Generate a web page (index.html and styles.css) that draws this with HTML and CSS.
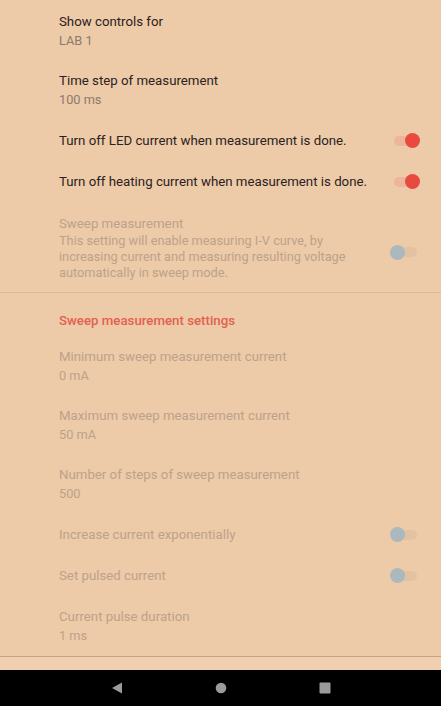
FILE: index.html
```html
<!DOCTYPE html>
<html>
<head>
<meta charset="utf-8">
<link rel="stylesheet" href="styles.css">
</head>
<body>
<div class="screen">
  <div class="list">
    <div class="pref">
      <div class="text">
        <div class="title">Show controls for</div>
        <div class="summary">LAB 1</div>
      </div>
    </div>
    <div class="pref">
      <div class="text">
        <div class="title">Time step of measurement</div>
        <div class="summary">100 ms</div>
      </div>
    </div>
    <div class="pref single">
      <div class="text">
        <div class="title">Turn off LED current when measurement is done.</div>
      </div>
      <div class="switch on"><span class="track"></span><span class="knob"></span></div>
    </div>
    <div class="pref single">
      <div class="text">
        <div class="title">Turn off heating current when measurement is done.</div>
      </div>
      <div class="switch on"><span class="track"></span><span class="knob"></span></div>
    </div>
    <div class="pref sweep disabled">
      <div class="text">
        <div class="title">Sweep measurement</div>
        <div class="desc">This setting will enable measuring I-V curve, by increasing current and measuring resulting voltage automatically in sweep mode.</div>
      </div>
      <div class="switch off"><span class="track"></span><span class="knob"></span></div>
    </div>
    <div class="divider"></div>
    <div class="category">Sweep measurement settings</div>
    <div class="pref disabled">
      <div class="text">
        <div class="title">Minimum sweep measurement current</div>
        <div class="summary">0 mA</div>
      </div>
    </div>
    <div class="pref disabled">
      <div class="text">
        <div class="title">Maximum sweep measurement current</div>
        <div class="summary">50 mA</div>
      </div>
    </div>
    <div class="pref disabled">
      <div class="text">
        <div class="title">Number of steps of sweep measurement</div>
        <div class="summary">500</div>
      </div>
    </div>
    <div class="pref single disabled">
      <div class="text">
        <div class="title">Increase current exponentially</div>
      </div>
      <div class="switch off"><span class="track"></span><span class="knob"></span></div>
    </div>
    <div class="pref single disabled">
      <div class="text">
        <div class="title">Set pulsed current</div>
      </div>
      <div class="switch off"><span class="track"></span><span class="knob"></span></div>
    </div>
    <div class="pref disabled last">
      <div class="text">
        <div class="title">Current pulse duration</div>
        <div class="summary">1 ms</div>
      </div>
    </div>
    <div class="divider dark"></div>
    <div class="strip"></div>
  </div>
  <div class="nav">
    <svg class="nav-icon" width="12" height="12" viewBox="0 0 12 12"><polygon points="11,0.5 11,11.5 1,6" fill="#9b9b9b"/></svg>
    <svg class="nav-icon" width="12" height="12" viewBox="0 0 12 12"><circle cx="6" cy="6" r="5.3" fill="#9b9b9b"/></svg>
    <svg class="nav-icon" width="12" height="12" viewBox="0 0 12 12"><rect x="0.5" y="0.5" width="11" height="11" rx="1" fill="#9b9b9b"/></svg>
  </div>
</div>
</body>
</html>
```

FILE: styles.css
```css
html, body {
  margin: 0;
  padding: 0;
  background: #edcaa8;
}
.screen {
  width: 441px;
  height: 706px;
  display: flex;
  flex-direction: column;
  font-family: Roboto, "Liberation Sans", sans-serif;
  background: #edcaa8;
  overflow: hidden;
}
.list {
  flex: 1;
  display: flex;
  flex-direction: column;
  overflow: hidden;
  padding-top: 1px;
}
.pref {
  display: flex;
  align-items: center;
  padding: 11px 0 10px 59px;
}
.pref .text {
  flex: 1;
}
.title {
  font-size: 13.25px;
  line-height: 19px;
  color: #2b221d;
}
.summary {
  font-size: 12.75px;
  line-height: 19px;
  color: #8b7a6d;
}
.pref.single {
  padding: 12px 0 10px 59px;
}
.pref.sweep {
  padding: 14px 0 11px 59px;
}
.pref.sweep .title {
  line-height: 18px;
}
.desc {
  font-size: 12.75px;
  line-height: 16px;
  width: 312px;
}
.disabled .title,
.disabled .summary,
.disabled .desc {
  color: #bca28a;
}
.pref.last {
  padding: 12px 0 10px 59px;
}
.divider {
  height: 1px;
  background: #dcb897;
}
.divider.dark {
  background: #caa482;
  margin-top: 1px;
}
.strip {
  flex: 1;
  background: #efcfae;
}
.category {
  padding: 19px 0 6px 59px;
  font-size: 13.25px;
  line-height: 18px;
  font-weight: 500;
  color: #e4604f;
}
.switch {
  position: relative;
  width: 30px;
  height: 16px;
  margin-right: 21px;
  flex: none;
}
.switch .track {
  position: absolute;
  left: 4px;
  right: 3px;
  top: 3px;
  height: 10px;
  border-radius: 5px;
}
.switch .knob {
  position: absolute;
  top: 0.5px;
  width: 15px;
  height: 15px;
  border-radius: 50%;
}
.switch.on .track {
  background: rgba(236, 130, 120, 0.28);
}
.switch.on .knob {
  right: 0;
  background: #e84a40;
}
.switch.off .track {
  background: rgba(205, 175, 155, 0.3);
}
.switch.off .knob {
  left: 0;
  background: #abb8be;
}
.pref.sweep .switch {
  margin-top: 8px;
}
.nav {
  height: 36px;
  flex: none;
  background: #000;
  display: flex;
  align-items: center;
  justify-content: center;
  gap: 92px;
}
.nav-icon {
  display: block;
}
```
